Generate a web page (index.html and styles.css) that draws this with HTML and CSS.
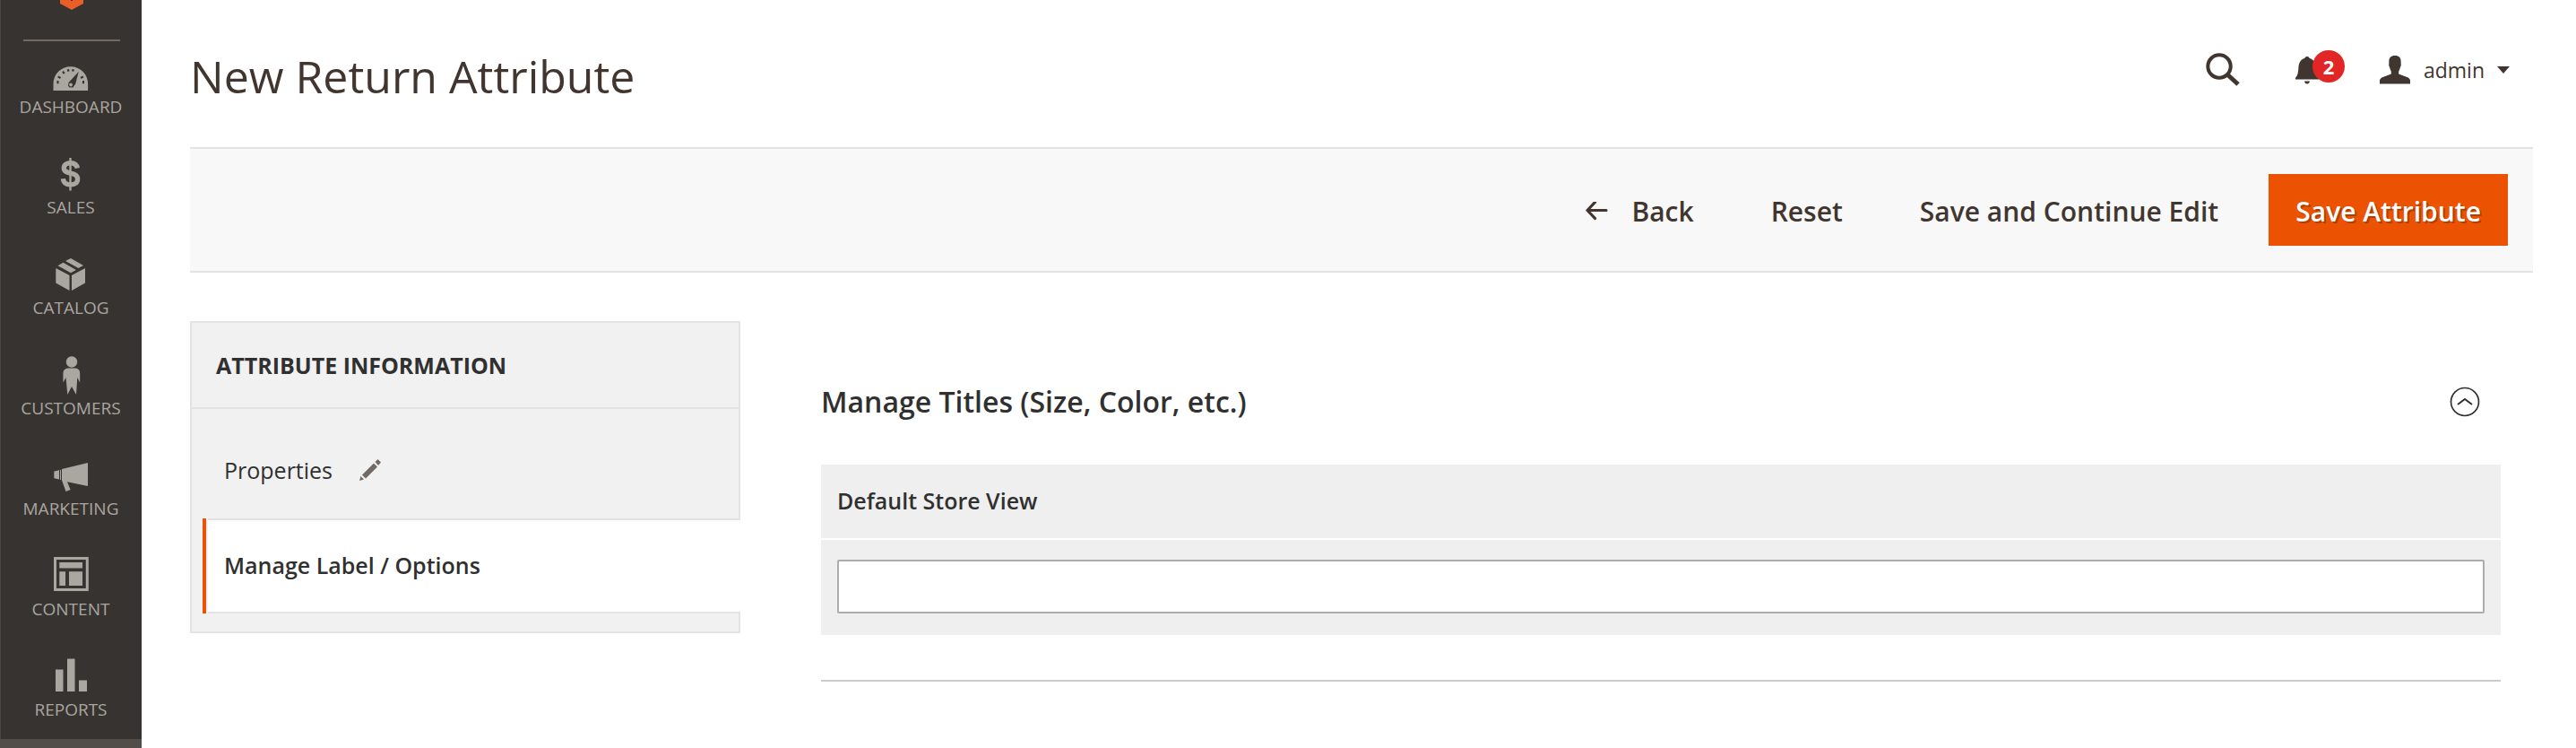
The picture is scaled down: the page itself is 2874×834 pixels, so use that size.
FILE: index.html
```html
<!DOCTYPE html>
<html lang="en">
<head>
<meta charset="utf-8">
<title>New Return Attribute</title>
<link rel="stylesheet" href="styles.css">
</head>
<body>
<div class="app">
  <aside class="sidebar">
    <div class="brand">
      <svg class="brand-mark" viewBox="0 0 28 12" aria-hidden="true"><path d="M1 0H27V4L14 11 1 4Z" fill="#eb5e28"/><path d="M13 0h2v1h-2z" fill="#373330"/></svg>
    </div>
    <nav class="menu" aria-label="Main">
      <a class="menu-item" href="#">
        <svg class="menu-icon" viewBox="0 0 40 44" aria-hidden="true"><path d="M0.500 40V32.500a19.300 19.300 0 0 1 38.600 0V40Z" fill="currentColor"/><g fill="#373330"><path d="M4.500 29h2v3.200h-2zM33 29h2v3.200h-2z"/><path d="M6.200 23.500l2.800 1.600-1 1.900-2.800-1.700zM33.400 23.500l-2.800 1.600 1 1.900 2.800-1.700zM10.200 19.300l1.700-1.200 1.700 2.200-1.600 1.400zM15.700 16.500l2.300-.5.500 2.300-2.100.6zM21.500 16l2.500.5-.8 2.300-2.200-.5z"/><path d="M28.700 19L25.300 32.200 22.500 36.500H18.600L17 34.500 17.600 31Z"/></g><circle cx="20" cy="33.500" r="1.900" fill="currentColor"/></svg>
        <span>Dashboard</span>
      </a>
      <a class="menu-item" href="#">
        <svg class="menu-icon" viewBox="0 0 40 44" aria-hidden="true"><g fill="none" stroke="currentColor"><path d="M27.300 14.500C26.500 10 23.500 8.700 19.700 8.700 15.500 8.700 12.300 10.700 12.300 14.300 12.300 22.500 27.600 17.500 27.600 26.700 27.600 30.700 24.200 32.900 19.700 32.900 15 32.900 11.800 31 11.300 26.300" stroke-width="5.400"/><path d="M19.500 3V39.500" stroke-width="2.400"/></g></svg>
        <span>Sales</span>
      </a>
      <a class="menu-item" href="#">
        <svg class="menu-icon" viewBox="0 0 40 44" aria-hidden="true"><path d="M3.300 14L18.500 22V39L3.300 30.500ZM36 14L21 22V39L36 30.500ZM20 3L34 11 28.500 14 14 6ZM11.500 7.800L26 16 20 19.300 5.500 11.300Z" fill="currentColor"/></svg>
        <span>Catalog</span>
      </a>
      <a class="menu-item" href="#">
        <svg class="menu-icon" viewBox="0 0 40 44" aria-hidden="true"><circle cx="21" cy="6.500" r="6.200" fill="currentColor"/><path d="M17 13.500H25Q30.200 14 30.200 19V29.500L27.300 24 26 43 21 34 16.300 43 14.500 24 11.400 29.500V19Q11.600 14 17 13.500Z" fill="currentColor"/></svg>
        <span>Customers</span>
      </a>
      <a class="menu-item" href="#">
        <svg class="menu-icon" viewBox="0 0 40 44" aria-hidden="true"><path d="M39 7V33L16 28.300 19.600 37 14.500 39 10 26.500V14ZM1.300 16.500L7 15.300V25.500L1.300 24.300ZM8 15h1v11h-1z" fill="currentColor"/></svg>
        <span>Marketing</span>
      </a>
      <a class="menu-item" href="#">
        <svg class="menu-icon" viewBox="0 0 40 44" aria-hidden="true"><path d="M2.500 1.500H38.300V36.500H2.500Z" fill="none" stroke="currentColor" stroke-width="3"/><path d="M7.300 6H33V12.500H7.300ZM7.300 16.300H14V32H7.300ZM18 16.300H33V32H18Z" fill="currentColor"/></svg>
        <span>Content</span>
      </a>
      <a class="menu-item" href="#">
        <svg class="menu-icon" viewBox="0 0 40 44" aria-hidden="true"><path d="M3 13.500H11.500V38H3ZM16 1.500H24.500V38H16ZM29 25.500H38V38H29Z" fill="currentColor"/></svg>
        <span>Reports</span>
      </a>
    </nav>
    <div class="menu-next"></div>
  </aside>

  <main class="page">
    <header class="page-header">
      <h1 class="page-title">New Return Attribute</h1>
      <div class="header-tools">
        <button class="tool" type="button" aria-label="Search">
          <svg width="40" height="40" viewBox="0 0 40 40" aria-hidden="true"><circle cx="16" cy="16" r="12.700" fill="none" stroke="currentColor" stroke-width="4"/><path d="M25 25L37 36" stroke="currentColor" stroke-width="5"/></svg>
        </button>
        <button class="tool bell" type="button" aria-label="Notifications">
          <svg width="28" height="32" viewBox="0 0 28 32" aria-hidden="true"><path d="M14 1C15.500 1 16.500 1.800 16.700 3 21.500 4.300 23.300 8.500 23.600 13.500 23.900 19 24.500 22.500 27 24.800V26.500H1V24.800C3.500 22.500 4.100 19 4.400 13.500 4.700 8.500 6.500 4.300 11.300 3 11.500 1.800 12.500 1 14 1ZM11 28.500H17Q16.500 31.500 14 31.500 11.500 31.500 11 28.500Z" fill="currentColor"/></svg>
          <span class="badge">2</span>
        </button>
        <button class="tool account" type="button">
          <svg width="36" height="32" viewBox="0 0 36 32" aria-hidden="true"><path d="M18 0C22.500 0 24.800 2.500 24.600 6.500L24.700 9.500Q25.300 11.500 24 12.500C23.600 15 22.700 16.500 22.200 17.700V20.500L31.500 24Q35 25.500 35 28V31.500H1V28Q1 25.500 4.500 24L13.800 20.500V17.700C13.300 16.500 12.400 15 12 12.500Q10.700 11.500 11.300 9.500L11.400 6.500C11.200 2.500 13.500 0 18 0Z" fill="currentColor"/></svg>
          <span>admin</span>
          <svg class="caret" width="14" height="8" viewBox="0 0 14 8" aria-hidden="true"><path d="M0 0H14L7 8Z" fill="currentColor"/></svg>
        </button>
      </div>
    </header>

    <div class="toolbar">
      <button class="action back" type="button">
        <svg width="26" height="22" viewBox="0 0 26 22" aria-hidden="true"><path d="M24 9.500H3M11.500 .500L3 9.500 11.500 18.500" fill="none" stroke="currentColor" stroke-width="3.200" stroke-linecap="round" stroke-linejoin="round"/></svg>
        Back
      </button>
      <button class="action" type="button">Reset</button>
      <button class="action" type="button">Save and Continue Edit</button>
      <button class="action primary" type="button">Save Attribute</button>
    </div>

    <div class="columns">
      <nav class="tabs" aria-label="Attribute Information">
        <h2 class="tabs-title">Attribute Information</h2>
        <div class="tabs-list">
          <a class="tab" href="#">Properties
            <svg width="24" height="24" viewBox="0 0 24 24" aria-hidden="true"><path d="M0 24L1.500 19 5 22.500ZM3 17.500L16 4.500 20 8.500 7 21.500ZM17.500 3L20.500 0 24 3.500 21 7Z" fill="#736963"/></svg>
          </a>
          <a class="tab active" href="#" aria-current="page">Manage Label / Options</a>
        </div>
      </nav>

      <section class="titles">
        <div class="section-head">
          <h2 class="section-title">Manage Titles (Size, Color, etc.)</h2>
          <button class="tool" type="button" aria-label="Collapse">
            <svg width="34" height="34" viewBox="0 0 34 34" aria-hidden="true"><circle cx="17" cy="17" r="15.500" fill="none" stroke="#303030" stroke-width="1.700"/><path d="M9 20L17 14 25 20" fill="none" stroke="#303030" stroke-width="2"/></svg>
          </button>
        </div>
        <table class="grid">
          <thead><tr><th scope="col"><label for="store-title">Default Store View</label></th></tr></thead>
          <tbody><tr><td><input class="field" id="store-title" type="text"></td></tr></tbody>
        </table>
      </section>
    </div>
  </main>
</div>
</body>
</html>
```
FILE: styles.css
```css
* {
  box-sizing: border-box;
}

body {
  margin: 0;
  background: #fff;
  color: #303030;
  font: 25px/36px "Open Sans", "Noto Sans", sans-serif;
}

h1,
h2 {
  margin: 0;
}

a {
  color: inherit;
  text-decoration: none;
}

button {
  border: 0;
  padding: 0;
  background: none;
  color: #41362f;
  font: inherit;
  cursor: pointer;
}

svg {
  display: block;
  flex: none;
}

.app {
  display: flex;
  min-height: 100vh;
}

/* Sidebar */

.sidebar {
  display: flex;
  flex-direction: column;
  flex: none;
  width: 158px;
  box-shadow: inset 1px 0 #4a4542;
  background: #373330;
}

.brand {
  height: 46px;
  margin: 0 24px 0 26px;
  border-bottom: 2px solid #736963;
}

.brand-mark {
  width: 28px;
  margin: 0 auto;
}

.menu {
  margin-top: 5px;
}

.menu-item {
  display: flex;
  flex-direction: column;
  align-items: center;
  gap: 2px;
  height: 112px;
  padding-top: 10px;
  color: #aaa6a0;
  font-size: 19px;
  line-height: 24px;
  text-transform: uppercase;
}

.menu-icon {
  width: 40px;
  height: 44px;
}

.menu-next {
  flex: 1;
  max-height: 10px;
  margin-top: -11px;
  background: #524d49;
}

/* Page header */

.page {
  flex: 1;
  min-width: 0;
  padding: 0 48px 0 54px;
}

.page-header {
  display: flex;
  align-items: flex-start;
  justify-content: space-between;
  height: 164px;
  padding: 48px 26px 0 0;
}

.page-title {
  color: #41362f;
  font-size: 50px;
  font-weight: 400;
  line-height: 74px;
}

.header-tools {
  display: flex;
  align-items: center;
  gap: 60px;
  height: 60px;
}

.bell {
  position: relative;
  margin-right: 6px;
}

.badge {
  position: absolute;
  left: 20px;
  bottom: 2px;
  width: 36px;
  height: 36px;
  border-radius: 18px;
  background: #e22626;
  color: #fff;
  font-size: 22px;
  font-weight: 700;
  line-height: 36px;
}

.account {
  display: flex;
  align-items: center;
  gap: 14px;
  font-size: 23px;
}

/* Toolbar */

.toolbar {
  display: flex;
  align-items: center;
  justify-content: flex-end;
  gap: 26px;
  height: 140px;
  padding-right: 28px;
  border: 2px solid #e3e3e3;
  border-width: 2px 0;
  background: #f8f8f8;
}

.action {
  display: flex;
  align-items: center;
  gap: 26px;
  height: 80px;
  padding: 3px 30px 0;
  font-size: 30px;
  font-weight: 600;
}

.primary {
  background: #eb5202;
  color: #fff;
  text-shadow: 2px 2px 0 rgba(0, 0, 0, 0.25);
}

/* Columns */

.columns {
  display: flex;
  align-items: flex-start;
  gap: 90px;
  padding: 54px 36px 0 0;
}

.tabs {
  flex: none;
  width: 614px;
  border: 2px solid #e3e3e3;
  background: #f1f1f1;
}

.tabs-title {
  padding: 29px 27px;
  border-bottom: 2px solid #e3e3e3;
  font-size: 25px;
  font-weight: 700;
  text-transform: uppercase;
}

.tabs-list {
  padding: 16px 0 20px 12px;
}

.tab {
  display: flex;
  align-items: center;
  gap: 30px;
  height: 106px;
  padding: 0 0 2px 24px;
}

.active {
  position: relative;
  margin: 0 -2px 0 6px;
  padding-left: 18px;
  border: 2px solid #e3e3e3;
  border-width: 2px 0;
  background: #fff;
  font-weight: 600;
}

.active::before {
  content: "";
  position: absolute;
  top: -2px;
  bottom: -2px;
  left: -6px;
  width: 4px;
  background: #eb5202;
}

.titles {
  flex: 1;
  min-width: 0;
  border-bottom: 2px solid #ccc;
  padding-bottom: 50px;
}

.section-head {
  display: flex;
  align-items: center;
  justify-content: space-between;
  padding: 68px 23px 48px 0;
}

.section-title {
  font-size: 32px;
  font-weight: 600;
  line-height: 44px;
}

.grid {
  width: 100%;
  border-collapse: collapse;
}

.grid th,
.grid td {
  padding: 22px 18px 24px;
  background: #efefef;
  text-align: left;
}

.grid th {
  border-bottom: 2px solid #fff;
  font-weight: 600;
}

.field {
  display: block;
  width: 100%;
  height: 60px;
  padding: 0 18px;
  border: 2px solid #adadad;
  border-radius: 2px;
  background: #fff;
  color: inherit;
  font: inherit;
}
```
